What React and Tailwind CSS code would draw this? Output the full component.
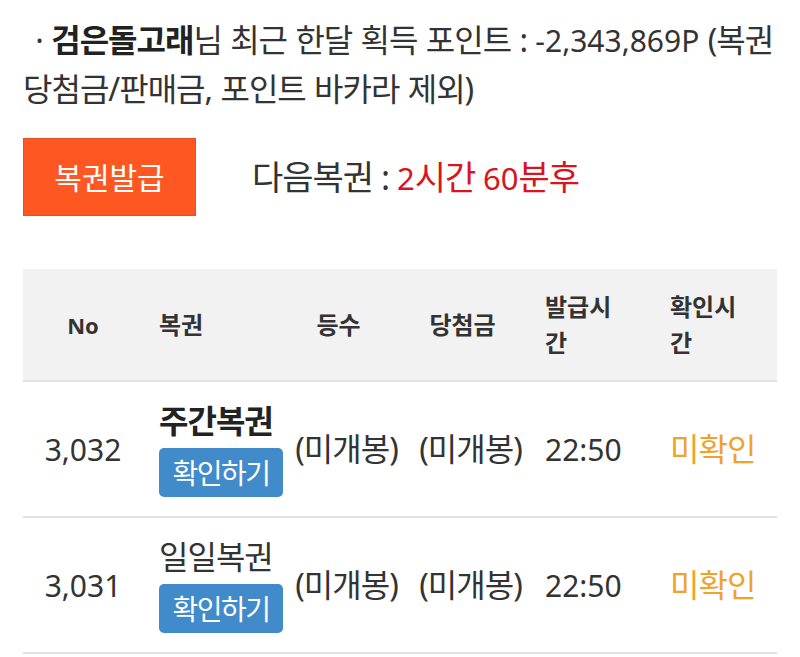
import React from "react";

const rows = [
  { no: "3,032", name: "주간복권", bold: true, rank: "(미개봉)", prize: "(미개봉)", issued: "22:50", status: "미확인" },
  { no: "3,031", name: "일일복권", bold: false, rank: "(미개봉)", prize: "(미개봉)", issued: "22:50", status: "미확인" },
];

const App = () => {
  return (
    <div
      className="min-h-screen bg-white px-[23px] text-[#333]"
      style={{ fontFamily: '"Noto Sans", "Noto Sans CJK KR", sans-serif' }}
    >
      <p className="pt-4 text-[32px] leading-[48px] tracking-[-1px] [word-spacing:1px] break-keep">
        <span className="pl-1">{"\u00a0· "}</span>
        <b className="font-bold text-[#222]">검은돌고래</b>님 최근 한달 획득 포인트 :{" "}
        <span className="text-[30px] tracking-normal">-2,343,869P</span> (복권 당첨금/판매금, 포인트 바카라 제외)
      </p>

      <div className="mt-[25px] flex items-center">
        <button className="h-[78px] w-[173px] border border-[#e4501f] bg-[#ff5722] text-[30px] text-white">
          복권발급
        </button>
        <div className="ml-[56px] text-[34px] tracking-[-1px]">
          다음복권 : <span className="text-[#d9141e]"><span className="text-[31px] tracking-normal">2</span>시간 <span className="text-[31px] tracking-normal">60</span>분후</span>
        </div>
      </div>

      <table className="mt-[53px] w-full table-fixed border-collapse">
        <colgroup>
          <col className="w-[120px]" />
          <col className="w-[142px]" />
          <col className="w-[123px]" />
          <col className="w-[125px]" />
          <col className="w-[125px]" />
          <col className="w-[119px]" />
        </colgroup>
        <thead>
          <tr className="h-[112px] border-b-2 border-[#e2e2e2] bg-[#f2f2f2] text-[24px] font-bold leading-[36px] text-[#333]">
            <th className="text-center text-[22px] font-bold">No</th>
            <th className="pl-4 text-left font-bold">복권</th>
            <th className="pr-4 text-center font-bold">등수</th>
            <th className="pr-4 text-center font-bold">당첨금</th>
            <th className="pl-3 text-left font-bold">
              <span className="block w-[76px]">발급시간</span>
            </th>
            <th className="pl-3 text-left font-bold">
              <span className="block w-[76px]">확인시간</span>
            </th>
          </tr>
        </thead>
        <tbody>
          {rows.map((row) => (
            <tr key={row.no} className="h-[136px] border-b-2 border-[#e2e2e2] text-[32px] tracking-[-1px]">
              <td className="text-center text-[30px] tracking-normal">{row.no}</td>
              <td className="pl-4">
                <div className={row.bold ? "font-bold leading-[40px] text-[#222]" : "leading-[40px]"}>
                  {row.name}
                </div>
                <button className="mt-[7px] h-[49px] w-[124px] rounded-[5px] bg-[#428bca] text-[28px] leading-none tracking-[-1.5px] text-white">
                  확인하기
                </button>
              </td>
              <td className="text-center">{row.rank}</td>
              <td className="text-center">{row.prize}</td>
              <td className="pl-3 text-[30px] tracking-normal">{row.issued}</td>
              <td className="pl-3 text-[#eea32b]">{row.status}</td>
            </tr>
          ))}
        </tbody>
      </table>
    </div>
  );
};

export default App;
